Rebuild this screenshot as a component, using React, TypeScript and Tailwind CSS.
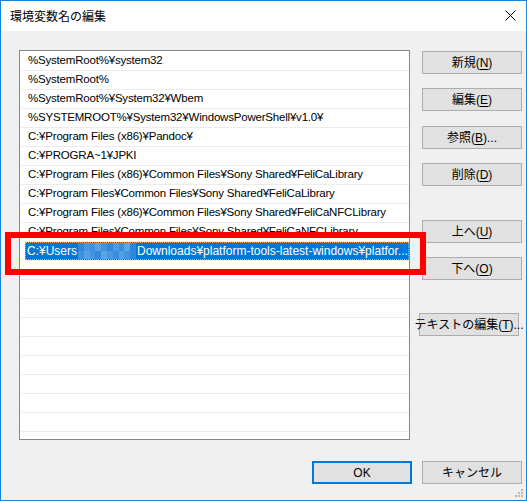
const rows = [
  "%SystemRoot%¥system32",
  "%SystemRoot%",
  "%SystemRoot%¥System32¥Wbem",
  "%SYSTEMROOT%¥System32¥WindowsPowerShell¥v1.0¥",
  "C:¥Program Files (x86)¥Pandoc¥",
  "C:¥PROGRA~1¥JPKI",
  "C:¥Program Files (x86)¥Common Files¥Sony Shared¥FeliCaLibrary",
  "C:¥Program Files¥Common Files¥Sony Shared¥FeliCaLibrary",
  "C:¥Program Files (x86)¥Common Files¥Sony Shared¥FeliCaNFCLibrary",
  "C:¥Program Files¥Common Files¥Sony Shared¥FeliCaNFCLibrary",
];

const mosaic = [
  ["#2f88da", "#4a99e0", "#3d91dd", "#5aa3e3", "#4395de", "#3389db", "#4e9be1", "#3a8fdc", "#5fa6e4", "#2c86d9"],
  ["#3d91dd", "#55a0e2", "#4595de", "#3489db", "#5ba4e3", "#4a99e0", "#388ddc", "#52a0e2", "#4093de", "#3187da"],
];

const Btn = ({ children, className = "" }: { children: React.ReactNode; className?: string }) => (
  <button className={`w-[100px] h-[23px] bg-[#e1e1e1] border border-[#adadad] text-[12px] text-black flex items-center justify-center leading-none whitespace-nowrap font-['Liberation_Sans','Noto_Sans_CJK_JP',sans-serif] ${className}`}>
    {children}
  </button>
);

const U = ({ c }: { c: string }) => <span className="underline underline-offset-[2px]">{c}</span>;

export default function App() {
  return (
    <div className="w-[527px] h-[501px] border border-[#1883d7] bg-[#f0f0f0] flex flex-col relative font-['Liberation_Sans','Noto_Sans_CJK_JP',sans-serif] text-black">
      {/* title bar */}
      <div className="h-[30px] bg-white flex items-center justify-between pl-[9px] pr-[10px]">
        <span className="text-[12px] font-['Noto_Sans_CJK_JP',sans-serif]">環境変数名の編集</span>
        <svg width="11" height="11" viewBox="0 0 11 11" className="mt-[-1px]">
          <path d="M0.5 0.5 L10.5 10.5 M10.5 0.5 L0.5 10.5" stroke="#000" strokeWidth="1" />
        </svg>
      </div>

      <div className="flex-1 flex flex-col">
        <div className="flex pt-[19px] pl-[18px] gap-[12px]">
          {/* list */}
          <div className="w-[391px] h-[390px] border border-[#828790] bg-white pt-[1px] overflow-hidden text-[11.5px] tracking-[-0.2px]">
            {rows.map((r) => (
              <div key={r} className="h-[19px] ml-[1px] border-b border-[#ececec] flex items-center pl-[7px] whitespace-nowrap">
                {r}
              </div>
            ))}
            <div className="h-[19px] ml-[1px] border-b border-[#ececec] flex">
              <div className="ml-[4px] flex-1 bg-[#0078d7] border border-dotted border-[#e8a25a] flex items-center pl-[1px] text-white text-[12px] tracking-normal whitespace-nowrap overflow-hidden">
                <span>C:¥Users</span>
                <span className="flex flex-col w-[58px] h-[17px] ml-[1px] mr-[1px] shrink-0">
                  {mosaic.map((line, i) => (
                    <span key={i} className="flex flex-1">
                      {line.map((c, j) => (
                        <span key={j} className="flex-1" style={{ background: c }} />
                      ))}
                    </span>
                  ))}
                </span>
                <span>Downloads¥platform-tools-latest-windows¥platfor...</span>
              </div>
            </div>
            {Array.from({ length: 10 }).map((_, i) => (
              <div key={i} className="h-[19px] ml-[1px] border-b border-[#ececec]" />
            ))}
          </div>

          {/* buttons */}
          <div className="flex flex-col pt-[1px] w-[100px]">
            <Btn>新規(<U c="N" />)</Btn>
            <Btn className="mt-[14px]">編集(<U c="E" />)</Btn>
            <Btn className="mt-[15px]">参照(<U c="B" />)...</Btn>
            <Btn className="mt-[14px]">削除(<U c="D" />)</Btn>
            <Btn className="mt-[34px]">上へ(<U c="U" />)</Btn>
            <Btn className="mt-[14px]">下へ(<U c="O" />)</Btn>
            <Btn className="mt-[33px] ml-[-3px]">テキストの編集(<U c="T" />)...</Btn>
          </div>
        </div>

        <div className="flex justify-end gap-[10px] pr-[4px] mt-[21px]">
          <button className="w-[100px] h-[23px] bg-[#e1e1e1] border-2 border-[#0078d7] text-[12px] flex items-center justify-center">OK</button>
          <Btn>キャンセル</Btn>
        </div>
      </div>

      {/* red annotation */}
      <div className="absolute left-[4px] top-[231px] w-[421px] h-[43px] border-[6px] border-[#ff0000]" />

      {/* resize grip */}
      <svg width="10" height="10" viewBox="0 0 10 10" className="absolute right-[2px] bottom-[2px]">
        <rect x="7" y="1" width="2" height="2" fill="#b8b8b8" />
        <rect x="4" y="4" width="2" height="2" fill="#b8b8b8" />
        <rect x="7" y="4" width="2" height="2" fill="#b8b8b8" />
        <rect x="1" y="7" width="2" height="2" fill="#b8b8b8" />
        <rect x="4" y="7" width="2" height="2" fill="#b8b8b8" />
        <rect x="7" y="7" width="2" height="2" fill="#b8b8b8" />
      </svg>
    </div>
  );
}
